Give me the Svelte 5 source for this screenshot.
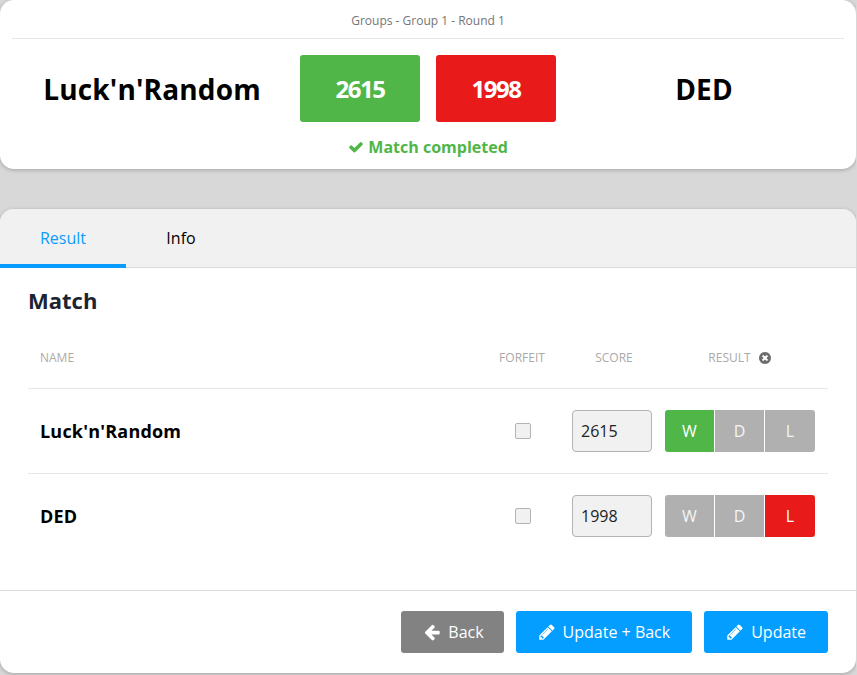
<script>
	const players = [
		{ name: "Luck'n'Random", score: 2615, result: 'W' },
		{ name: 'DED', score: 1998, result: 'L' }
	];
	const options = ['W', 'D', 'L'];
	const pencil =
		'M491 1536l91-91-235-235-91 91v107h128v128h107zm523-928q0-22-22-22-10 0-17 7l-542 542q-7 7-7 17 0 22 22 22 10 0 17-7l542-542q7-7 7-17zm-54-192l416 416-832 832h-416v-416zm683 96q0 53-37 90l-166 166-416-416 166-165q36-38 90-38 53 0 91 38l235 234q37 39 37 91z';
	let activeTab = $state('Result');
</script>

<main>
	<section class="card summary">
		<p class="stage">Groups - Group 1 - Round 1</p>
		<div class="teams">
			<h2 class="team">{players[0].name}</h2>
			<div class="box win">{players[0].score}</div>
			<div class="box loss">{players[1].score}</div>
			<h2 class="team">{players[1].name}</h2>
		</div>
		<p class="status">
			<svg class="check" viewBox="0 0 1792 1792"><path d="M1671 566q0 40-28 68l-724 724-136 136q-28 28-68 28t-68-28l-136-136-362-362q-28-28-28-68t28-68l136-136q28-28 68-28t68 28l294 295 656-657q28-28 68-28t68 28l136 136q28 28 28 68z" /></svg>
			Match completed
		</p>
	</section>

	<section class="card detail">
		<nav class="tabs">
			{#each ['Result', 'Info'] as tab}
				<button class="tab" class:active={activeTab === tab} onclick={() => (activeTab = tab)}>{tab}</button>
			{/each}
		</nav>

		<div class="body">
			<h3>Match</h3>
			<div class="row head">
				<span class="name-col">NAME</span>
				<span class="forfeit-col">FORFEIT</span>
				<span class="score-col">SCORE</span>
				<span class="result-col">
					RESULT
					<svg class="clear" viewBox="0 0 1792 1792"><path d="M1277 1122q0-26-19-45l-181-181 181-181q19-19 19-45 0-27-19-46l-90-90q-19-19-46-19-26 0-45 19l-181 181-181-181q-19-19-45-19-27 0-46 19l-90 90q-19 19-19 46 0 26 19 45l181 181-181 181q-19 19-19 45 0 27 19 46l90 90q19 19 46 19 26 0 45-19l181-181 181 181q19 19 45 19 27 0 46-19l90-90q19-19 19-46zm387-226q0 209-103 385.5t-279.5 279.5-385.5 103-385.5-103-279.5-279.5-103-385.5 103-385.5 279.5-279.5 385.5-103 385.5 103 279.5 279.5 103 385.5z" /></svg>
				</span>
			</div>
			{#each players as p}
				<div class="row player">
					<strong class="name-col">{p.name}</strong>
					<span class="forfeit-col"><span class="checkbox"></span></span>
					<span class="score-col"><input class="score" value={p.score} /></span>
					<span class="segments">
						{#each options as o}
							<span class="seg" class:w={p.result === o && o === 'W'} class:l={p.result === o && o === 'L'}>{o}</span>
						{/each}
					</span>
				</div>
			{/each}
		</div>

		<footer>
			<button class="btn grey">
				<svg viewBox="0 0 1792 1792"><path d="M1664 896v128q0 53-32.5 90.5t-84.5 37.5h-704l293 294q38 36 38 90t-38 90l-75 76q-37 37-90 37-52 0-91-37l-651-652q-37-37-37-90 0-52 37-91l651-650q38-38 91-38 52 0 90 38l75 74q38 38 38 91t-38 91l-293 293h704q52 0 84.5 37.5t32.5 90.5z" /></svg>
				Back
			</button>
			<button class="btn blue"><svg viewBox="0 0 1792 1792"><path d={pencil} /></svg> Update + Back</button>
			<button class="btn blue"><svg viewBox="0 0 1792 1792"><path d={pencil} /></svg> Update</button>
		</footer>
	</section>
</main>

<style>
	:global(body) {
		margin: 0;
		background: #d8d8d8;
		font-family: 'Open Sans', sans-serif;
		color: #000;
	}

	main {
		width: 856px;
		height: 675px;
		overflow: hidden;
	}

	.card {
		background: #fff;
		border-radius: 14px;
		box-shadow: 0 1px 4px rgba(0, 0, 0, 0.25);
	}

	.summary {
		height: 169px;
		padding: 0 12px;
		box-sizing: border-box;
	}

	.stage {
		margin: 0;
		height: 38px;
		line-height: 41px;
		text-align: center;
		font-size: 12px;
		color: #757575;
		border-bottom: 1px solid #e6e6e6;
	}

	.teams {
		display: flex;
		align-items: center;
		gap: 16px;
		margin-top: 16px;
	}

	.team {
		width: 280px;
		height: 67px;
		margin: 0 -8px 0 0;
		text-align: center;
		font-size: 28px;
		font-weight: 700;
		line-height: 69px;
		letter-spacing: 0.15px;
	}

	.team:last-child {
		margin: 0 0 0 -8px;
	}

	.box {
		width: 120px;
		height: 67px;
		line-height: 67px;
		text-align: center;
		color: #fff;
		font-size: 24px;
		font-weight: 700;
		letter-spacing: -1.5px;
		border-radius: 3px;
	}

	.win {
		background: #50b648;
	}

	.loss {
		background: #e81a1a;
	}

	.status {
		margin: 14px 0 0;
		text-align: center;
		color: #50b648;
		font-size: 16px;
		font-weight: 700;
		line-height: 22px;
	}

	.check {
		width: 16px;
		height: 16px;
		fill: currentColor;
		vertical-align: -2px;
	}

	.detail {
		margin-top: 40px;
		height: 464px;
		display: flex;
		flex-direction: column;
		overflow: hidden;
	}

	.tabs {
		display: flex;
		height: 58px;
		background: #f1f1f1;
		border-bottom: 1px solid #d9d9d9;
		flex-shrink: 0;
	}

	.tab {
		width: 110px;
		height: 59px;
		padding: 0 0 2px;
		border: none;
		background: none;
		font: inherit;
		font-size: 16px;
		color: #000;
		cursor: pointer;
	}

	.tab.active {
		width: 126px;
		color: #099cff;
		border-bottom: 4px solid #099cff;
		padding: 2px 0 0;
	}

	.body {
		flex: 1;
		padding: 0 28px;
	}

	h3 {
		margin: 17px 0 0;
		font-size: 22px;
		font-weight: 700;
		line-height: 30px;
		color: #1c2430;
	}

	.row {
		display: flex;
		align-items: center;
		border-bottom: 1px solid #e6e6e6;
	}

	.row.head {
		height: 74px;
		padding-top: 12px;
		box-sizing: border-box;
		font-size: 12px;
		color: #a9a9a9;
	}

	.row.player {
		height: 84px;
	}

	.row.player:last-child {
		border-bottom: none;
	}

	.name-col {
		width: 452px;
		padding-left: 12px;
		box-sizing: border-box;
	}

	.head .name-col {
		color: #b3a99d;
	}

	.player .name-col {
		font-size: 18px;
		font-weight: 700;
		letter-spacing: 0.2px;
	}

	.forfeit-col {
		width: 84px;
		display: flex;
		justify-content: center;
	}

	.score-col {
		width: 80px;
		margin-left: 8px;
		text-align: center;
	}

	.head .score-col {
		padding-left: 4px;
		box-sizing: border-box;
	}

	.result-col {
		width: 150px;
		margin-left: 13px;
		display: flex;
		justify-content: center;
		align-items: center;
		gap: 7px;
	}

	.clear {
		width: 14px;
		height: 14px;
		fill: #6e6e6e;
	}

	.checkbox {
		width: 14px;
		height: 14px;
		margin-left: 2px;
		background: #f1f1f1;
		border: 1px solid #b3b3b3;
		border-radius: 2px;
	}

	.score {
		width: 80px;
		height: 42px;
		box-sizing: border-box;
		padding: 0 8px;
		border: 1px solid #b3b3b3;
		border-radius: 4px;
		background: #f1f1f1;
		font: inherit;
		font-size: 16px;
		color: #222;
		display: block;
	}

	.segments {
		display: grid;
		grid-template-columns: 49px 49px 50px;
		width: 150px;
		height: 42px;
		margin-left: 13px;
		gap: 1px;
		border-radius: 3px;
		overflow: hidden;
	}

	.seg {
		background: #b0b0b0;
		color: #f5f5f5;
		font-size: 16px;
		font-weight: 500;
		line-height: 42px;
		text-align: center;
	}

	.seg.w {
		background: #50b648;
		color: #fff;
	}

	.seg.l {
		background: #e81a1a;
		color: #fff;
	}

	footer {
		height: 83px;
		flex-shrink: 0;
		border-top: 1px solid #d9d9d9;
		display: flex;
		justify-content: flex-end;
		align-items: flex-start;
		gap: 12px;
		padding: 20px 28px 0;
		box-sizing: border-box;
	}

	.btn {
		height: 42px;
		border: none;
		border-radius: 3px;
		color: #fff;
		font: inherit;
		font-size: 16px;
		padding: 0 22px;
		display: flex;
		align-items: center;
		gap: 7px;
		cursor: pointer;
	}

	.btn svg {
		width: 18px;
		height: 18px;
		fill: currentColor;
	}

	.grey {
		background: #828282;
		padding-right: 20px;
	}

	.blue {
		background: #039eff;
	}
</style>
